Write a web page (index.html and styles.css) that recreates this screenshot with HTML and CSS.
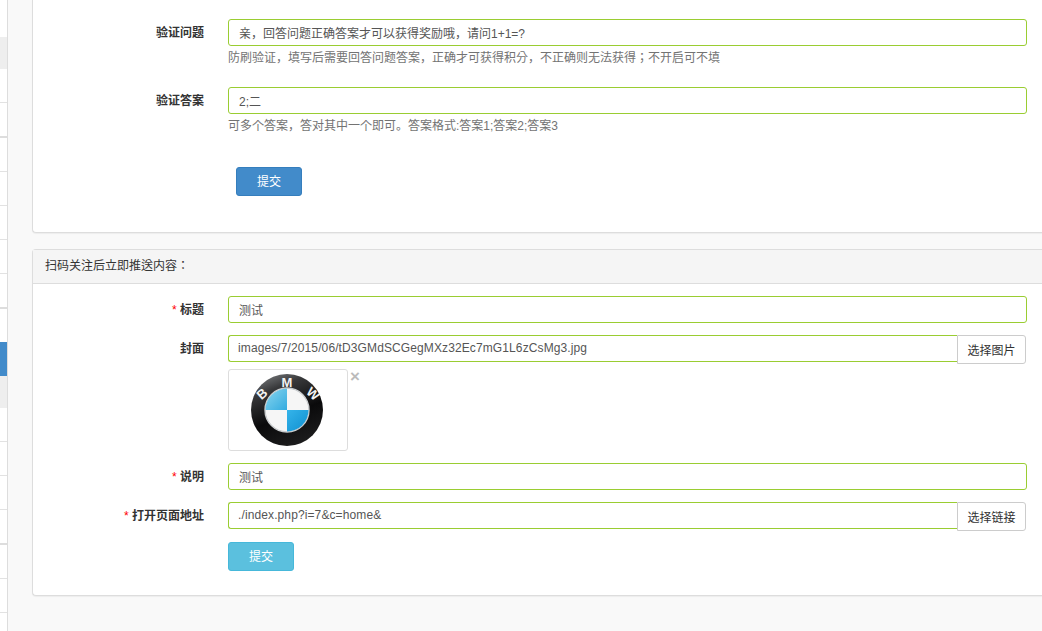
FILE: index.html
```html
<!DOCTYPE html>
<html>
<head>
<meta charset="utf-8">
<title>表单</title>
<link rel="stylesheet" href="styles.css">
</head>
<body>
<div class="layout">
  <aside class="side">
    <div class="s h37 plain"></div>
    <div class="s h32 grey"></div>
    <div class="s h34"></div>
    <div class="s h35 thick"></div>
    <div class="s h34"></div>
    <div class="s h34"></div>
    <div class="s h34"></div>
    <div class="s h34"></div>
    <div class="s h35 thick"></div>
    <div class="s h33 plain"></div>
    <div class="s h34 blue"></div>
    <div class="s h32 grey"></div>
    <div class="s h34"></div>
    <div class="s h34"></div>
    <div class="s h34"></div>
    <div class="s h35 thick"></div>
    <div class="s h34"></div>
    <div class="s h34"></div>
  </aside>
  <main class="main">
    <section class="panel first">
      <div class="row q1">
        <label class="lab">验证问题</label>
        <div class="field">
          <input class="inp" value="亲，回答问题正确答案才可以获得奖励哦，请问1+1=?">
          <p class="help">防刷验证，填写后需要回答问题答案，正确才可获得积分，不正确则无法获得；不开启可不填</p>
        </div>
      </div>
      <div class="row q2">
        <label class="lab">验证答案</label>
        <div class="field">
          <input class="inp" value="2;二">
          <p class="help">可多个答案，答对其中一个即可。答案格式:答案1;答案2;答案3</p>
        </div>
      </div>
      <button class="btn primary">提交</button>
    </section>
    <section class="panel second">
      <div class="head">扫码关注后立即推送内容：</div>
      <div class="body">
        <div class="row"><label class="lab"><i>*</i> 标题</label><div class="field"><input class="inp" value="测试"></div></div>
        <div class="row"><label class="lab">封面</label><div class="field"><div class="group"><input class="inp joined latin" value="images/7/2015/06/tD3GMdSCGegMXz32Ec7mG1L6zCsMg3.jpg"><button class="add">选择图片</button></div></div></div>
        <div class="row thumbrow">
          <div class="lab"></div>
          <div class="field thumbwrap">
            <div class="thumb">
              <svg width="76" height="76" viewBox="0 0 76 76" role="img" aria-label="BMW">
                <defs>
                  <linearGradient id="rim" x1="0.2" y1="0" x2="0.6" y2="1">
                    <stop offset="0" stop-color="#77797b"/>
                    <stop offset=".22" stop-color="#37383a"/>
                    <stop offset=".6" stop-color="#0a0a0b"/>
                    <stop offset="1" stop-color="#1c1c1d"/>
                  </linearGradient>
                  <linearGradient id="sky" x1="0" y1="0" x2="1" y2="1">
                    <stop offset="0" stop-color="#8ad6ee"/>
                    <stop offset="1" stop-color="#33abe0"/>
                  </linearGradient>
                  <linearGradient id="sky2" x1="0" y1="0" x2="1" y2="1">
                    <stop offset="0" stop-color="#35b4ea"/>
                    <stop offset="1" stop-color="#0f8fd0"/>
                  </linearGradient>
                </defs>
                <circle cx="37" cy="38" r="36" fill="url(#rim)"/>
                <circle cx="37" cy="38" r="22" fill="#f6f6f6" stroke="#c9ccce" stroke-width="1.4"/>
                <path d="M37 38V16.500A21.500 21.500 0 0 0 15.500 38Z" fill="url(#sky)"/>
                <path d="M37 38V59.500A21.500 21.500 0 0 0 58.500 38Z" fill="url(#sky2)"/>
                <text class="bmw" x="37" y="14.500" text-anchor="middle">M</text>
                <text class="bmw" x="15" y="25" text-anchor="middle" transform="rotate(-42 15 25)">B</text>
                <text class="bmw" x="60" y="25" text-anchor="middle" transform="rotate(42 60 25)">W</text>
              </svg>
            </div>
            <span class="close">×</span>
          </div>
        </div>
        <div class="row"><label class="lab"><i>*</i> 说明</label><div class="field"><input class="inp" value="测试"></div></div>
        <div class="row tight"><label class="lab"><i>*</i> 打开页面地址</label><div class="field"><div class="group"><input class="inp joined latin" value="./index.php?i=7&amp;c=home&amp;"><button class="add">选择链接</button></div></div></div>
        <div class="row"><div class="lab"></div><div class="field"><button class="btn info">提交</button></div></div>
      </div>
    </section>
  </main>
</div>
</body>
</html>
```
FILE: styles.css
```css
* { box-sizing: border-box; }
html, body { margin: 0; height: 100%; overflow: hidden; }
body {
  background: #f9f9f9;
  font: 12px/18px "Liberation Sans", "Noto Sans CJK KR", sans-serif;
  color: #333;
}
.layout { display: flex; height: 631px; }
.side { width: 8px; background: #fff; border-right: 1px solid #ddd; flex: none; }
.s { border-bottom: 1px solid #e2e2e2; }
.h32 { height: 32px; }
.h33 { height: 33px; }
.h34 { height: 34px; }
.h35 { height: 35px; }
.h37 { height: 37px; }
.plain { border-bottom: 0; }
.thick { border-bottom: 2px solid #ddd; }
.grey { background: #eee; border-bottom: 0; }
.blue { background: #428bca; border-bottom: 0; }
.main { flex: 1; min-width: 0; padding-left: 24px; }
.panel { background: #fff; border: 1px solid #ddd; border-right: 0; border-radius: 4px 0 0 4px; box-shadow: 0 1px 1px rgba(0,0,0,.05); }
.first { height: 233px; border-top: 0; border-top-left-radius: 0; padding-top: 19px; }
.second { margin-top: 16px; height: 347px; }
.head { height: 34px; padding: 7px 12px 0; background: #f5f5f5; border-bottom: 1px solid #ddd; color: #333; }
.body { padding-top: 12px; }
.row { display: flex; margin-bottom: 12px; }
.lab { width: 171px; height: 27px; text-align: right; font-weight: 700; line-height: 27px; padding-top: 1px; color: #333; flex: none; }
.lab i { color: #f00; font-style: normal; font-weight: 400; }
.field { margin-left: 24px; width: 799px; flex: none; }
.inp {
  display: block; width: 100%; height: 27px; padding: 0 10px 1px;
  border: 1px solid #9acd32; border-radius: 3px; background: #fff;
  font: 12px "Liberation Sans", "Noto Sans CJK KR", sans-serif; color: #555; outline: 0;
}
.help { margin: 3px 0 0; line-height: 18px; color: #737373; }
.q1 { margin-bottom: 20px; }
.q2 { margin-bottom: 32px; }
.group { display: flex; padding-right: 1px; }
.joined { flex: 1; min-width: 0; border-radius: 3px 0 0 3px; border-right: 0; }
.latin { padding-left: 9px; letter-spacing: .11px; }
.add {
  width: 69px; height: 29px; flex: none; background: #fff; color: #333;
  border: 1px solid #ccc; border-radius: 0 3px 3px 0; padding: 0;
  font: 12px "Liberation Sans", "Noto Sans CJK KR", sans-serif;
}
.btn {
  display: block; width: 66px; height: 29px; padding: 0 0 2px; color: #fff; border-radius: 3px;
  font: 12px "Liberation Sans", "Noto Sans CJK KR", sans-serif;
}
.primary { margin-left: 203px; background: #428bca; border: 1px solid #357ebd; }
.info { background: #5bc0de; border: 1px solid #46b8da; }
.tight { margin-bottom: 11px; }
.thumbrow { margin-top: -7px; }
.thumbwrap { display: flex; align-items: flex-start; }
.thumb {
  width: 120px; height: 82px; border: 1px solid #ddd; border-radius: 3px; background: #fff;
  display: flex; align-items: center; justify-content: center;
}
.close { margin-left: 2px; color: #bbb; font: 700 17px/16px "Liberation Sans", sans-serif; }
.bmw { font: 700 13px "Liberation Sans", sans-serif; fill: #f2f2f2; }
```
